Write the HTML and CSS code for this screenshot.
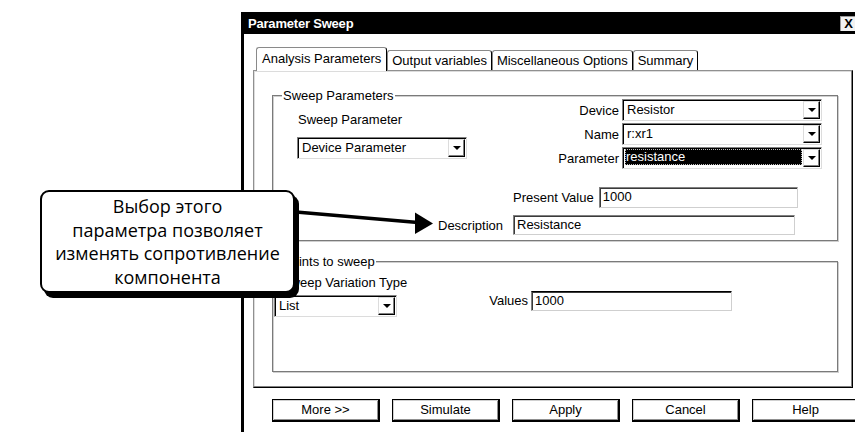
FILE: index.html
```html
<!DOCTYPE html>
<html>
<head>
<meta charset="utf-8">
<link rel="stylesheet" href="styles.css">
</head>
<body>
<div class="dialog">
  <div class="titlebar">
    <span class="title">Parameter Sweep</span>
    <span class="close">X</span>
  </div>
  <div class="tabs">
    <div class="tab active">Analysis Parameters</div>
    <div class="tab">Output variables</div>
    <div class="tab">Miscellaneous Options</div>
    <div class="tab">Summary</div>
  </div>
  <div class="panel">
    <div class="group g1">
      <span class="legend">Sweep Parameters</span>
      <div class="g1-top">
        <div class="left-col">
          <div class="lbl sp-label">Sweep Parameter</div>
          <div class="combo sp-combo"><span class="val">Device Parameter</span><span class="dd"><i></i></span></div>
        </div>
        <div class="right-col">
          <span class="lbl">Device</span>
          <div class="combo"><span class="val">Resistor</span><span class="dd"><i></i></span></div>
          <span class="lbl">Name</span>
          <div class="combo"><span class="val">r:xr1</span><span class="dd"><i></i></span></div>
          <span class="lbl">Parameter</span>
          <div class="combo focus"><span class="val"><span class="sel">resistance</span></span><span class="dd"><i></i></span></div>
        </div>
      </div>
      <div class="g1-bottom">
        <span></span>
        <div class="pv-row"><span class="lbl">Present Value</span><div class="field pv-field">1000</div></div>
        <span class="lbl">Description</span>
        <div class="field desc-field">Resistance</div>
      </div>
    </div>
    <div class="group g2">
      <span class="legend">Points to sweep</span>
      <div class="g2-body">
        <div class="svt-col">
          <div class="lbl svt-label">Sweep Variation Type</div>
          <div class="combo list-combo"><span class="val">List</span><span class="dd"><i></i></span></div>
        </div>
        <span class="lbl values-label">Values</span>
        <div class="field values-field">1000</div>
      </div>
    </div>
  </div>
  <div class="buttons">
    <div class="btn">More &gt;&gt;</div>
    <div class="btn">Simulate</div>
    <div class="btn">Apply</div>
    <div class="btn">Cancel</div>
    <div class="btn">Help</div>
  </div>
</div>

<div class="callout">Выбор этого<br>параметра позволяет<br>изменять сопротивление<br>компонента</div>

<svg class="pointer" width="855" height="432" viewBox="0 0 855 432">
  <line x1="296" y1="212" x2="418" y2="222.5" stroke="#000" stroke-width="3.5"/>
  <polygon points="415,212.5 433,223.5 415,234" fill="#000"/>
</svg>
</body>
</html>
```
FILE: styles.css
```css
* { box-sizing: border-box; }
html, body { margin: 0; padding: 0; }
body {
  width: 855px;
  height: 432px;
  overflow: hidden;
  background: #fff;
  position: relative;
  font-family: "Liberation Sans", Arial, sans-serif;
  font-size: 13px;
  color: #000;
}

.dialog {
  margin: 12px 0 0 241px;
  width: 625px;
  height: 430px;
  border-left: 3px solid #000;
  border-top: 1px solid #000;
  background: #fff;
}

.titlebar {
  height: 21px;
  background: #000;
  color: #fff;
  display: flex;
  align-items: center;
  justify-content: space-between;
  padding-left: 4px;
}
.title { font-weight: bold; font-size: 13px; letter-spacing: -0.2px; }
.close {
  margin-right: 10px;
  width: 16px;
  height: 15px;
  background: #f2f2f2;
  border-left: 1px solid #9a9a9a;
  border-top: 1px solid #9a9a9a;
  color: #000;
  font-weight: bold;
  font-size: 13px;
  line-height: 13px;
  text-align: center;
}

.tabs {
  display: flex;
  align-items: flex-end;
  height: 23px;
  margin: 13px 0 0 12px;
  position: relative;
  z-index: 1;
}
.tab {
  height: 20px;
  padding: 0 4px;
  line-height: 19px;
  border: 1px solid #8a8a8a;
  border-bottom: none;
  border-right: 1px solid #000;
  border-radius: 3px 3px 0 0;
  background: #fff;
  white-space: nowrap;
}
.tab.active {
  height: 24px;
  margin-bottom: -1px;
  padding: 0 5px;
  line-height: 21px;
}

.panel {
  margin-left: 9px;
  width: 600px;
  height: 318px;
  border: 1px solid;
  border-color: #909090 #000 #000 #909090;
  box-shadow: inset -1px -1px 0 #808080, inset 1px 1px 0 #dcdcdc;
  padding: 24px 14px 0 18px;
}

.group {
  position: relative;
  border: 1px solid #7a7a7a;
  box-shadow: 1px 1px 0 #cfcfcf, inset 1px 1px 0 #cfcfcf;
}
.legend {
  position: absolute;
  top: -8px;
  left: 9px;
  background: #fff;
  padding: 0 1px;
  line-height: 15px;
}
.g1 { height: 146px; }
.g2 { height: 111px; margin-top: 20px; }

.lbl { line-height: 15px; white-space: nowrap; }

.g1-top {
  display: flex;
  justify-content: space-between;
  padding: 3px 15px 0 24px;
}
.sp-label { margin: 13px 0 0 1px; }
.sp-combo { margin-top: 10px; width: 170px; height: 23px; }

.right-col {
  display: grid;
  grid-template-columns: auto 200px;
  column-gap: 3px;
  row-gap: 2px;
  align-items: center;
}
.right-col .lbl { justify-self: end; }

.combo {
  display: flex;
  height: 22px;
  background: #fff;
  border: 1px solid;
  border-color: #808080 #dcdcdc #dcdcdc #808080;
  box-shadow: inset 1px 1px 0 #000;
}
.combo .val {
  flex: 1;
  padding: 2px 0 0 4px;
  line-height: 16px;
  white-space: nowrap;
}
.combo .dd {
  width: 17px;
  margin: 1px 1px 1px 0;
  border: 1px solid;
  border-color: #dcdcdc #000 #000 #dcdcdc;
  box-shadow: inset -1px -1px 0 #808080;
  display: flex;
  align-items: center;
  justify-content: center;
  background: #fff;
}
.combo .dd i {
  display: block;
  width: 0;
  height: 0;
  border-left: 4px solid transparent;
  border-right: 4px solid transparent;
  border-top: 4px solid #000;
}
.combo.focus .val {
  padding: 2px 1px 2px 2px;
}
.combo.focus .sel {
  display: block;
  height: 16px;
  background: #000;
  color: #fff;
  outline: 1px dotted #bbb;
  outline-offset: -1px;
  padding: 0 0 0 1px;
  margin-top: -1px;
  line-height: 16px;
}

.g1-bottom {
  display: grid;
  grid-template-columns: 75px auto;
  row-gap: 7px;
  margin: 18px 0 0 165px;
  align-items: center;
}
.pv-row { display: flex; align-items: center; }

.field {
  background: #fff;
  border: 1px solid;
  border-color: #808080 #cfcfcf #cfcfcf #808080;
  box-shadow: inset 1px 1px 0 #3a3a3a;
  padding: 1px 0 0 3px;
  line-height: 16px;
}
.pv-field { margin-left: 5px; width: 199px; height: 21px; }
.desc-field { width: 282px; height: 20px; }

.g2-body {
  display: grid;
  grid-template-columns: 125px 133px 201px;
  padding-top: 13px;
  align-items: start;
}
.svt-label { margin-left: 9px; }
.list-combo { margin: 5px 0 0 1px; width: 123px; height: 22px; }
.values-label {
  margin-top: 16px;
  line-height: 20px;
  text-align: right;
  padding-right: 3px;
}
.values-field {
  margin-top: 16px;
  height: 20px;
  border-top-color: #000;
}

.buttons {
  display: flex;
  gap: 12px;
  margin: 11px 0 0 28px;
}
.btn {
  width: 108px;
  height: 23px;
  border: 1px solid #000;
  border-right-width: 2px;
  border-bottom-width: 2px;
  box-shadow: inset 1px 1px 0 #d0d0d0, inset -1px -1px 0 #909090;
  text-align: center;
  line-height: 20px;
  background: #fff;
}

.callout {
  position: absolute;
  left: 40px;
  top: 190px;
  width: 255px;
  height: 103px;
  border: 2px solid #000;
  border-radius: 9px;
  background: #fff;
  box-shadow: 4px 5px 0 #000;
  font-family: "Open Sans", "Noto Sans", sans-serif;
  font-size: 18px;
  line-height: 23.5px;
  text-align: center;
  padding-top: 3px;
  z-index: 5;
  color: #000;
}

.pointer {
  position: absolute;
  left: 0;
  top: 0;
  z-index: 6;
  pointer-events: none;
}
```
